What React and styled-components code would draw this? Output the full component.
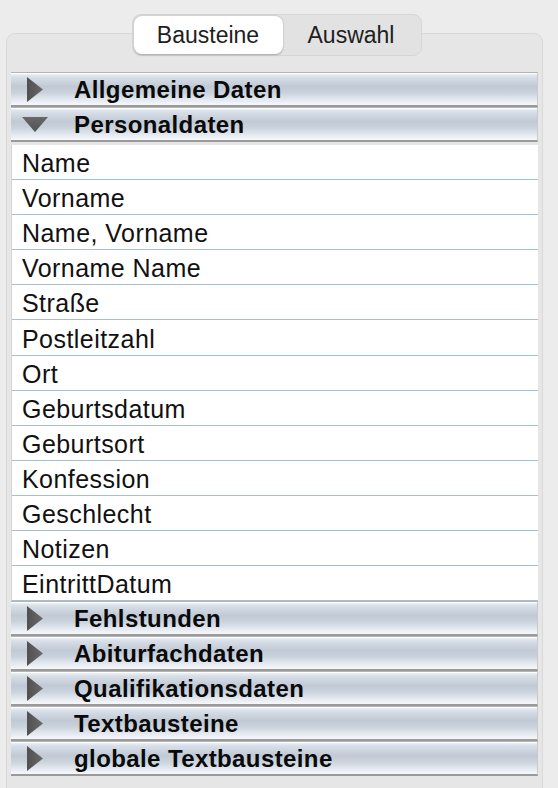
import React from 'react'
import styled, { createGlobalStyle } from 'styled-components'

const GlobalStyle = createGlobalStyle`
  html, body {
    margin: 0;
    padding: 0;
    background: #ececec;
    overflow: hidden;
  }
  body {
    font-family: "Liberation Sans", Arial, sans-serif;
    color: #111;
  }
`

const Wrapper = styled.div`
  width: 558px;
  height: 788px;
  padding: 14px 15px 0 6px;
  box-sizing: border-box;
  overflow: hidden;
`

const TabBar = styled.div`
  position: relative;
  z-index: 2;
  display: flex;
  justify-content: center;
  height: 42px;
  margin-bottom: -23px;
  padding-left: 4px;
`

const Segmented = styled.div`
  display: flex;
  padding: 1px;
  background: #e2e2e2;
  border: 1px solid #d6d6d6;
  border-radius: 9px;
  box-sizing: border-box;
  height: 42px;
  width: 290px;
`

const Segment = styled.div`
  width: ${p => p.$w}px;
  display: flex;
  align-items: center;
  justify-content: center;
  font-size: 23px;
  color: #1e1e1e;
  border-radius: 8px;
  background: ${p => (p.$active ? '#ffffff' : 'transparent')};
  box-shadow: ${p => (p.$active ? '0 0.5px 2px rgba(0,0,0,0.28)' : 'none')};
`

const Panel = styled.div`
  background: #e6e6e6;
  border: 1px solid #d9d9d9;
  border-radius: 9px;
  padding: 38px 5px 20px 4px;
  height: 790px;
  box-sizing: border-box;
`

const List = styled.div`
  display: flex;
  flex-direction: column;
  width: 527px;
`

const Header = styled.div`
  height: 35px;
  box-sizing: border-box;
  display: flex;
  align-items: center;
  border-top: 1px solid #b3b3b3;
  border-bottom: 2px solid #9a9a9a;
  border-right: 1px solid #c9c9c9;
  background: linear-gradient(
    to bottom,
    #f3f6fa 0%,
    #d8dfe8 12%,
    #c1c9d5 42%,
    #cad2dc 62%,
    #e6ebf1 85%,
    #f6f8fb 100%
  );
  box-shadow: inset 0 1px 0 #ffffff;
  padding-left: 11px;
`

const Arrow = styled.div`
  width: 26px;
  height: 26px;
  display: flex;
  align-items: center;
  justify-content: center;
  flex-shrink: 0;
`

const HeaderLabel = styled.span`
  margin-left: 26px;
  font-size: 24px;
  font-weight: 700;
  letter-spacing: 0.4px;
  color: #0a0a0a;
  line-height: 1;
  padding-top: 2px;
`

const Rows = styled.div`
  margin-top: 3px;
  background: #fff;
  border-left: 1px solid #d4d4d4;
`

const Row = styled.div`
  height: 35.1px;
  box-sizing: border-box;
  border-bottom: 1px solid #a4c0d6;
  display: flex;
  align-items: center;
  padding-left: 10px;
  padding-top: 3px;
  font-size: 25px;
  letter-spacing: 0.45px;
  color: #111;
`

const Triangle = ({ open }) =>
  open ? (
    <svg width="26" height="15" viewBox="0 0 26 15">
      <defs>
        <linearGradient id="tdown" x1="0" y1="0" x2="0" y2="1">
          <stop offset="0" stopColor="#686868" />
          <stop offset="1" stopColor="#525252" />
        </linearGradient>
      </defs>
      <polygon points="0,0 26,0 13,15" fill="url(#tdown)" />
    </svg>
  ) : (
    <svg width="16" height="25" viewBox="0 0 16 25">
      <defs>
        <linearGradient id="tright" x1="0" y1="0" x2="1" y2="0">
          <stop offset="0" stopColor="#505050" />
          <stop offset="1" stopColor="#6a6a6a" />
        </linearGradient>
      </defs>
      <polygon points="0,0 16,12.5 0,25" fill="url(#tright)" />
    </svg>
  )

const Section = ({ title, open }) => (
  <Header>
    <Arrow>
      <Triangle open={open} />
    </Arrow>
    <HeaderLabel>{title}</HeaderLabel>
  </Header>
)

const personal = [
  'Name',
  'Vorname',
  'Name, Vorname',
  'Vorname Name',
  'Straße',
  'Postleitzahl',
  'Ort',
  'Geburtsdatum',
  'Geburtsort',
  'Konfession',
  'Geschlecht',
  'Notizen',
  'EintrittDatum',
]

const after = [
  'Fehlstunden',
  'Abiturfachdaten',
  'Qualifikationsdaten',
  'Textbausteine',
  'globale Textbausteine',
]

const App = () => {
  return (
    <>
      <GlobalStyle />
      <Wrapper>
        <TabBar>
          <Segmented>
            <Segment $active $w={149}>Bausteine</Segment>
            <Segment $w={137}>Auswahl</Segment>
          </Segmented>
        </TabBar>
        <Panel>
          <List>
            <Section title="Allgemeine Daten" />
            <Section title="Personaldaten" open />
            <Rows>
              {personal.map(item => (
                <Row key={item}>{item}</Row>
              ))}
            </Rows>
            {after.map(t => (
              <Section key={t} title={t} />
            ))}
          </List>
        </Panel>
      </Wrapper>
    </>
  )
}

export default App
